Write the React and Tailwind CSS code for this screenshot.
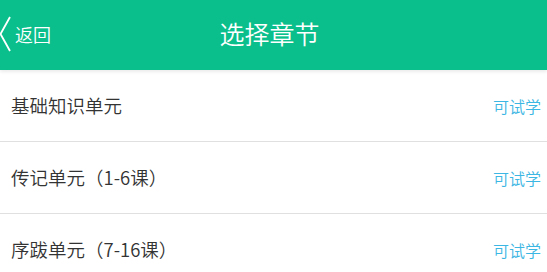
import React from "react";

const chapters = [
  { title: "基础知识单元", tag: "可试学" },
  { title: "传记单元（1-6课）", tag: "可试学" },
  { title: "序跋单元（7-16课）", tag: "可试学" },
];

const App = () => {
  return (
    <div className="w-[547px] h-[272px] overflow-hidden bg-white" style={{ fontFamily: '"Noto Sans CJK SC", "Noto Sans", sans-serif' }}>
      {/* Header */}
      <div className="relative h-[70px] bg-[#0abf8b] flex items-center justify-center pb-[3px] pr-[8px] shadow-[0_2px_3px_rgba(0,0,0,0.08)] z-10">
        <div className="absolute left-0 top-0 h-full flex items-center pb-[3px]">
          <svg width="12" height="36" viewBox="0 0 12 36" className="ml-[-1px]">
            <path d="M11 1 L1.5 18 L11 35" fill="none" stroke="white" strokeWidth="1.8" />
          </svg>
          <span className="ml-[4px] text-white text-[18px] leading-none font-[350]">返回</span>
        </div>
        <h1 className="text-white text-[25px] leading-none font-[350]">选择章节</h1>
      </div>

      {/* Chapter list */}
      <div className="flex flex-col">
        {chapters.map((c) => (
          <div key={c.title} className="h-[72px] flex items-center justify-between pl-[11px] pr-[6px] border-b border-[#e0e0e0]">
            <span className="text-[18.5px] text-[#333333] font-[350]">{c.title}</span>
            <span className="text-[16px] text-[#3cb6e3] font-[350]">{c.tag}</span>
          </div>
        ))}
      </div>
    </div>
  );
};

export default App;
